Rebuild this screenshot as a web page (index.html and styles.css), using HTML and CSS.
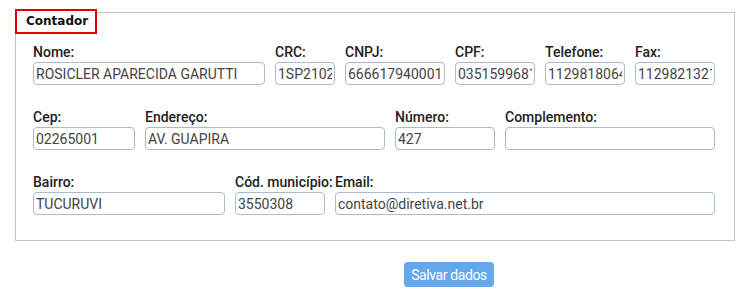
FILE: index.html
```html
<!DOCTYPE html>
<html lang="pt-BR">

<head>
    <meta charset="UTF-8">
    <meta name="viewport" content="width=device-width, initial-scale=1.0">
    <title>Contador</title>
    <link rel="stylesheet" href="styles.css">
</head>

<body>
    <form class="contador-form">
        <div class="contador-box">
            <div class="contador-legend">Contador</div>

            <div class="form-row">
                <div class="field w-nome">
                    <label>Nome:</label>
                    <input type="text" value="ROSICLER APARECIDA GARUTTI">
                </div>
                <div class="field w-crc">
                    <label>CRC:</label>
                    <input type="text" value="1SP210210">
                </div>
                <div class="field w-cnpj">
                    <label>CNPJ:</label>
                    <input type="text" value="66661794000148">
                </div>
                <div class="field w-cpf">
                    <label>CPF:</label>
                    <input type="text" value="03515996817">
                </div>
                <div class="field w-tel">
                    <label>Telefone:</label>
                    <input type="text" value="1129818064">
                </div>
                <div class="field w-tel">
                    <label>Fax:</label>
                    <input type="text" value="1129821321">
                </div>
            </div>

            <div class="form-row">
                <div class="field w-cep">
                    <label>Cep:</label>
                    <input type="text" value="02265001">
                </div>
                <div class="field w-endereco">
                    <label>Endereço:</label>
                    <input type="text" value="AV. GUAPIRA">
                </div>
                <div class="field w-numero">
                    <label>Número:</label>
                    <input type="text" value="427">
                </div>
                <div class="field w-complemento">
                    <label>Complemento:</label>
                    <input type="text" value="">
                </div>
            </div>

            <div class="form-row">
                <div class="field w-bairro">
                    <label>Bairro:</label>
                    <input type="text" value="TUCURUVI">
                </div>
                <div class="field w-municipio">
                    <label class="nowrap">Cód. município:</label>
                    <input type="text" value="3550308">
                </div>
                <div class="field w-email">
                    <label>Email:</label>
                    <input type="text" value="contato@diretiva.net.br">
                </div>
            </div>
        </div>

        <div class="form-actions">
            <button type="button" class="save-button">Salvar dados</button>
        </div>
    </form>
</body>

</html>
```

FILE: styles.css
```css
body {
    margin: 0;
    font-family: Roboto, "Liberation Sans", Arial, sans-serif;
    color: #222;
    background: #fff;
}

.contador-form {
    padding: 12px 21px 0 15px;
}

.contador-box {
    border: 1px solid #c4c4c4;
    padding: 0 17px 25px 17px;
}

.contador-legend {
    box-sizing: border-box;
    width: 82px;
    height: 25px;
    margin: -4px 0 0 -18px;
    padding: 0 0 0 9px;
    border: 2px solid #e00000;
    background: #fff;
    font-family: "DejaVu Sans", Verdana, sans-serif;
    font-size: 12px;
    font-weight: bold;
    line-height: 21px;
    color: #111;
}

.form-row {
    display: flex;
    gap: 10px;
    margin-top: 10px;
}

.form-row + .form-row {
    margin-top: 24px;
}

.field {
    display: flex;
    flex-direction: column;
    flex: none;
}

.field label {
    font-size: 14px;
    font-weight: 500;
    color: #222;
    height: 18px;
    line-height: 16px;
}

.nowrap {
    white-space: nowrap;
}

.field input {
    box-sizing: border-box;
    width: 100%;
    height: 23px;
    margin: 0;
    padding: 0 2px;
    border: 1px solid #a9bccf;
    border-radius: 4px;
    font-family: Roboto, "Liberation Sans", Arial, sans-serif;
    font-size: 14px;
    color: #444;
    background: #fff;
}

.w-nome { width: 232px; }
.w-crc { width: 60px; }
.w-cnpj { width: 100px; }
.w-cpf { width: 80px; }
.w-tel { width: 80px; }

.w-cep { width: 102px; }
.w-endereco { width: 240px; }
.w-numero { width: 100px; }
.w-complemento { width: 210px; }

.w-bairro { width: 192px; }
.w-municipio { width: 90px; }
.w-email { width: 380px; }

.form-actions {
    padding: 21px 0 0 389px;
}

.save-button {
    padding: 0;
    width: 90px;
    height: 25px;
    background-color: #62a8ea;
    color: #fff;
    border: none;
    border-radius: 4px;
    font-family: Roboto, "Liberation Sans", Arial, sans-serif;
    font-size: 14px;
    letter-spacing: -0.4px;
    white-space: nowrap;
    cursor: pointer;
}
```
